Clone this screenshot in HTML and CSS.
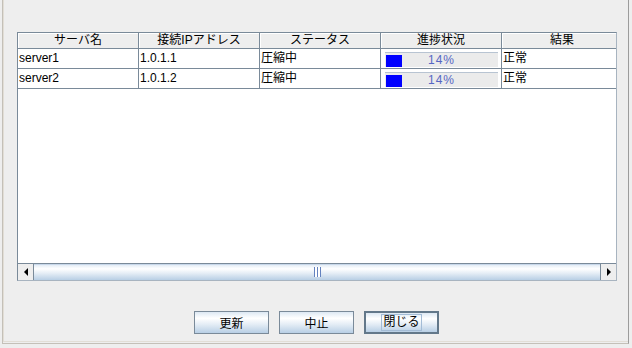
FILE: index.html
```html
<!DOCTYPE html>
<html lang="ja">
<head>
  <meta charset="UTF-8">
  <title>進捗状況</title>
  <link rel="stylesheet" href="styles.css">
</head>
<body>
<div class="window">
  <div class="content">
    <div class="scroll-pane">
      <div class="viewport">
        <table class="grid">
          <thead>
            <tr>
              <th>サーバ名</th>
              <th>接続IPアドレス</th>
              <th>ステータス</th>
              <th>進捗状況</th>
              <th>結果</th>
            </tr>
          </thead>
          <tbody>
            <tr>
              <td>server1</td>
              <td>1.0.1.1</td>
              <td>圧縮中</td>
              <td class="progress-cell">
                <div class="progress"><div class="fill" style="width: 14%"></div><span class="pct">14%</span></div>
              </td>
              <td>正常</td>
            </tr>
            <tr>
              <td>server2</td>
              <td>1.0.1.2</td>
              <td>圧縮中</td>
              <td class="progress-cell">
                <div class="progress"><div class="fill" style="width: 14%"></div><span class="pct">14%</span></div>
              </td>
              <td>正常</td>
            </tr>
          </tbody>
        </table>
      </div>
      <div class="hscroll">
        <div class="arrow left"><span class="tri-left"></span></div>
        <div class="thumb"><span class="grip"></span></div>
        <div class="arrow right"><span class="tri-right"></span></div>
      </div>
    </div>
    <div class="buttons">
      <button class="btn">更新</button>
      <button class="btn">中止</button>
      <button class="btn focused"><span class="focus-ring">閉じる</span></button>
    </div>
  </div>
</div>
</body>
</html>
```

FILE: styles.css
```css
html, body {
  margin: 0;
  padding: 0;
  background: #eeeeee;
  width: 632px;
  height: 348px;
  overflow: hidden;
  font-family: "Liberation Sans", "Noto Sans CJK JP", sans-serif;
  font-size: 12px;
  color: #000;
}

.window {
  margin-left: 2px;
  width: 625px;
  height: 343px;
  border-left: 1px solid #c4c0b8;
  border-right: 1px solid #9c9c9c;
  border-bottom: 1px solid #c4c0b8;
}

.content {
  height: 342px;
  border-left: 1px solid #e2ded6;
  border-bottom: 1px solid #e2ded6;
  padding: 32px 0 0 13px;
  box-sizing: border-box;
}

.scroll-pane {
  width: 600px;
  height: 249px;
  border: 1px solid #a8b4c0;
  border-left-color: #7a8a99;
  border-top-color: #7a8a99;
  box-sizing: border-box;
  display: flex;
  flex-direction: column;
  background: #fff;
}

.viewport {
  flex: 1;
  overflow: hidden;
}

.grid {
  border-collapse: collapse;
  table-layout: fixed;
  width: 600px;
}

.grid th {
  height: 15px;
  padding: 0;
  font-weight: normal;
  background: #eeeeee;
  border-right: 1px solid #7a8a99;
  border-bottom: 1px solid #7a8a99;
  text-align: center;
  line-height: 15px;
  width: 120px;
  box-shadow: inset 1px 1px 0 #ffffff;
}

.grid td {
  height: 19px;
  padding: 0 0 0 1px;
  border-right: 1px solid #7a8a99;
  border-bottom: 1px solid #7a8a99;
  line-height: 19px;
  white-space: nowrap;
  overflow: hidden;
}

.grid .progress-cell {
  padding: 0 3px 0 4px;
}

.progress {
  position: relative;
  height: 14px;
  background: #ebebeb;
  border-top: 1px solid #b8c4d2;
  margin-top: 1px;
  display: flex;
  align-items: flex-end;
}

.fill {
  height: 12px;
  margin-left: 1px;
  background: #0000ff;
}

.pct {
  position: absolute;
  left: 0;
  right: 0;
  top: 0;
  text-align: center;
  line-height: 14px;
  color: #5567c4;
  letter-spacing: 1px;
}

.hscroll {
  height: 16px;
  display: flex;
  border-top: 1px solid #7a8a99;
  background: #eeeeee;
}

.arrow {
  width: 15px;
  display: flex;
  align-items: center;
  justify-content: center;
  background: #eeeeee;
}

.arrow.left {
  border-right: 1px solid #7a8a99;
}

.arrow.right {
  border-left: 1px solid #7a8a99;
}

.tri-left {
  width: 0;
  height: 0;
  border-top: 4px solid transparent;
  border-bottom: 4px solid transparent;
  border-right: 4px solid #000;
}

.tri-right {
  width: 0;
  height: 0;
  border-top: 4px solid transparent;
  border-bottom: 4px solid transparent;
  border-left: 4px solid #000;
}

.thumb {
  flex: 1;
  display: flex;
  align-items: center;
  justify-content: center;
  background: linear-gradient(#dde8f3 0%, #ffffff 30%, #e3ecf5 60%, #b8cfe5 100%);
  box-shadow: inset 0 1px 0 #c8d8ea;
}

.grip {
  width: 7px;
  height: 10px;
  background: repeating-linear-gradient(90deg, #6382bf 0 1px, #ffffff 1px 3px);
}

.buttons {
  display: flex;
  justify-content: center;
  gap: 10px;
  margin-top: 30px;
  margin-left: -12px;
}

.btn {
  width: 75px;
  height: 23px;
  padding: 0;
  border: 1px solid #7a8a99;
  background: linear-gradient(#dde8f3 0%, #ffffff 30%, #e3ecf5 60%, #b8cfe5 100%);
  font-family: "Liberation Sans", "Noto Sans CJK JP", sans-serif;
  font-size: 12px;
  color: #000;
}

.btn.focused {
  border: 2px solid #63788a;
}

.focus-ring {
  display: inline-block;
  border: 1px solid #a3bcd6;
  padding: 0 1px;
  line-height: 15px;
}
```
